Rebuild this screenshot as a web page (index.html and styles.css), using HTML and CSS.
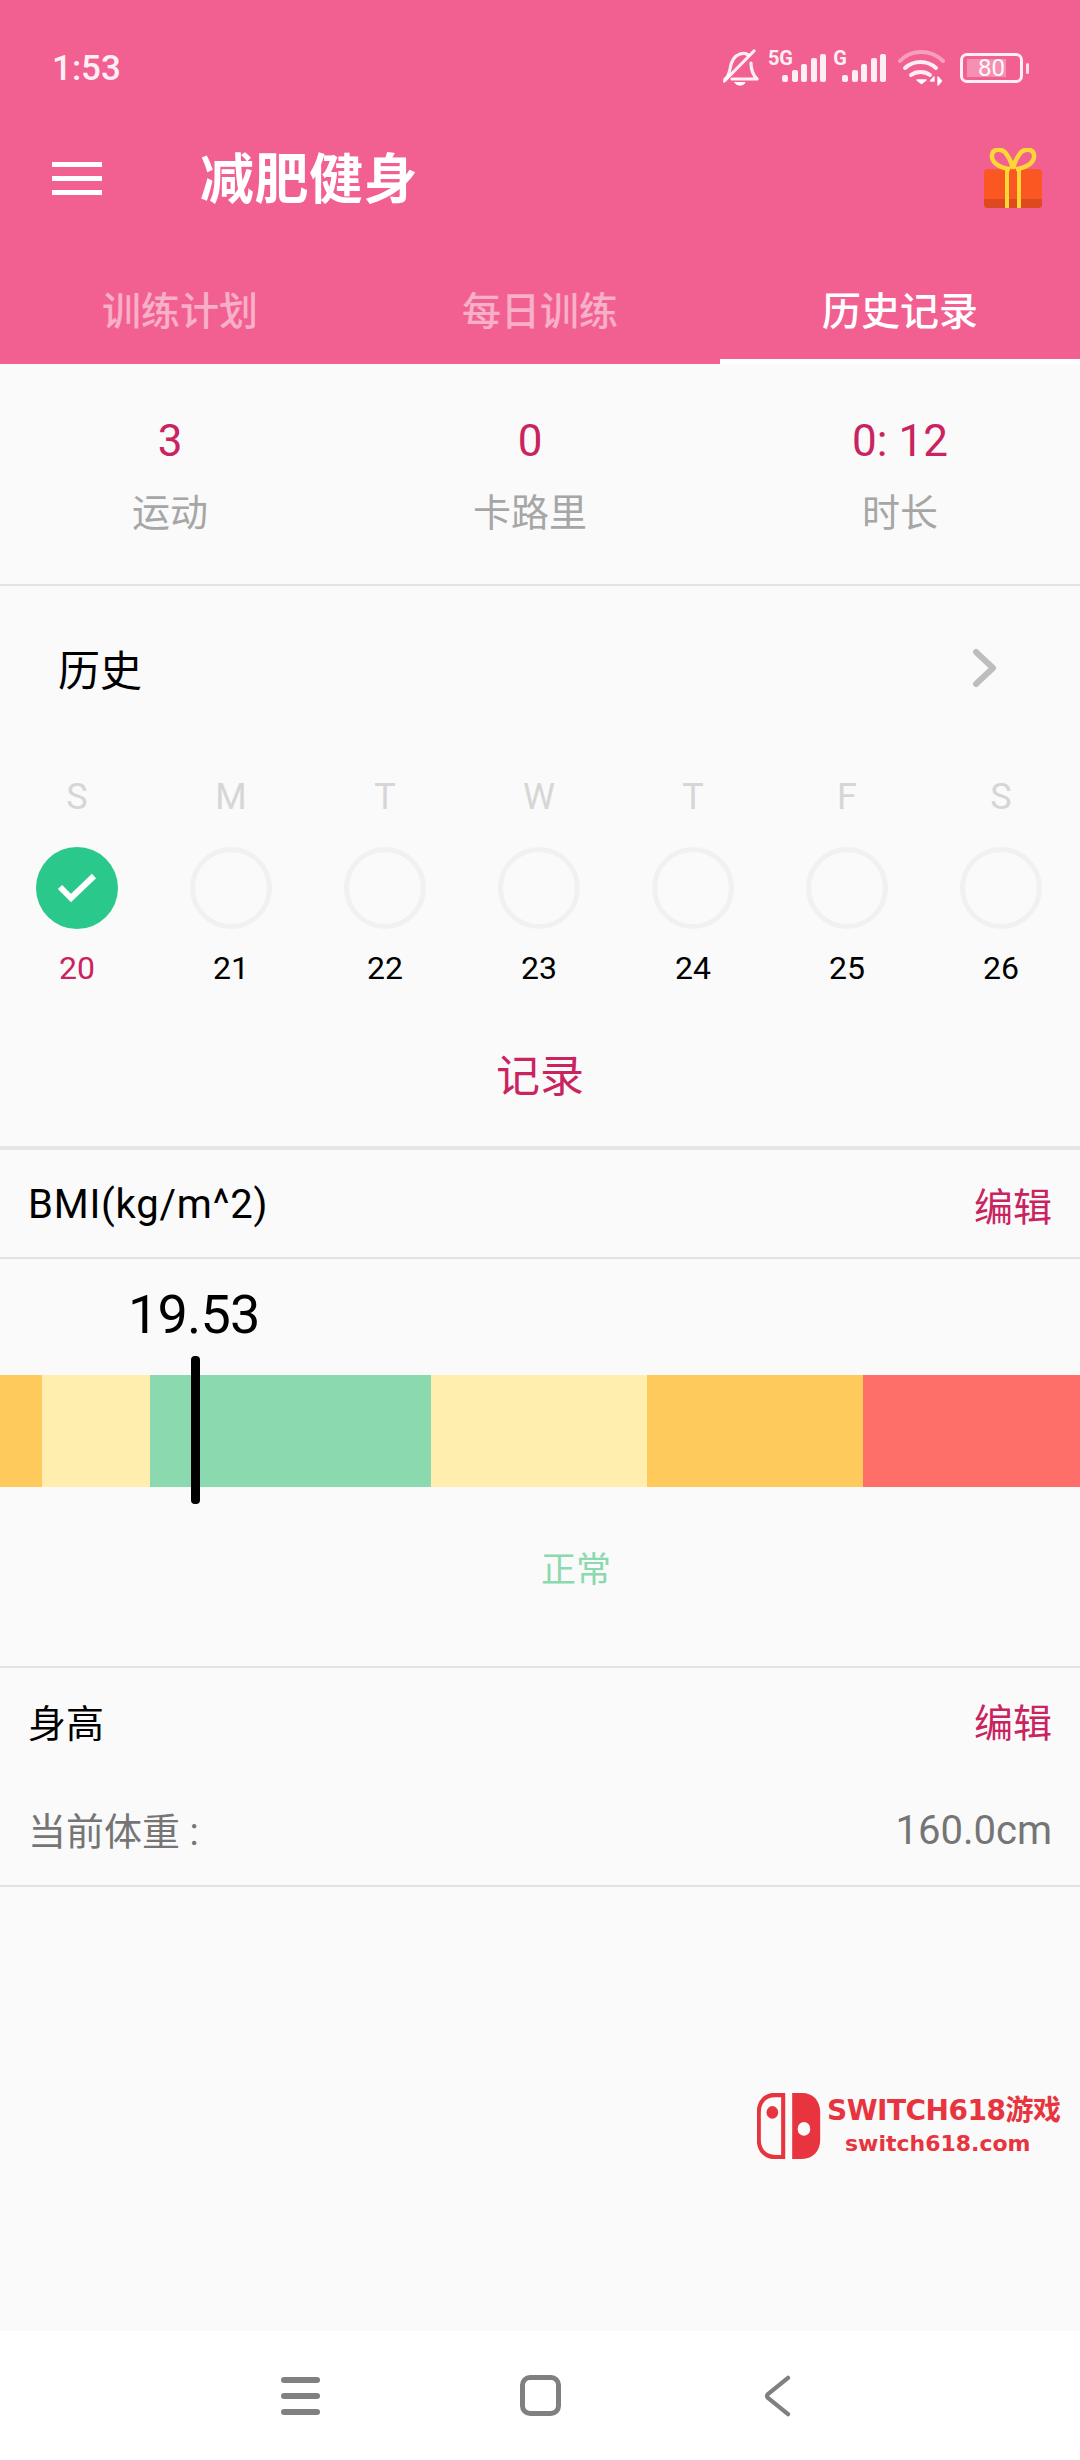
FILE: index.html
```html
<!DOCTYPE html>
<html lang="zh-CN">
<head>
    <meta charset="UTF-8">
    <meta name="viewport" content="width=device-width, initial-scale=1.0">
    <title>减肥健身</title>
    <link rel="stylesheet" href="styles.css">
</head>
<body>
    <header class="header">
        <div class="status-bar">
            <span class="time">1:53</span>
            <div class="status-icons">
                <svg class="icon-bell" width="36" height="38" viewBox="0 0 36 38" fill="none" stroke="#fff" stroke-opacity="0.9" stroke-width="3.2" stroke-linecap="round" stroke-linejoin="round">
                    <path d="M2 30c3-2 4-5 5-10 1-7 4-13 10-15 3-1 6-1 8 1"/>
                    <path d="M28 14c0 6 2 12 6 16H9"/>
                    <path d="M1.500 32 31 2"/>
                    <path d="M12 33.500h10c-1 3.500-9 3.500-10 0z" fill="#fff" stroke-width="1"/>
                </svg>
                <div class="signal">
                    <span class="signal-label">5G</span>
                    <i class="bar-1"></i><i class="bar-2"></i><i class="bar-3"></i><i class="bar-4"></i><i class="bar-5"></i>
                </div>
                <div class="signal signal-g">
                    <span class="signal-label">G</span>
                    <i class="bar-1"></i><i class="bar-2"></i><i class="bar-3"></i><i class="bar-4"></i><i class="bar-5"></i>
                </div>
                <svg class="icon-wifi" width="47" height="36" viewBox="0 0 47 36" fill="none" stroke="#fff" stroke-width="4" stroke-linecap="round">
                    <path d="M2 11C13-1 33-1 45 11" stroke-opacity="0.4"/>
                    <path d="M7 18c9-8 22-8 31 0" stroke-opacity="0.9"/>
                    <path d="M13 25c5-4 14-4 19 0" stroke-opacity="0.9"/>
                    <path d="M19 30h9l-4.500 3.500z" fill="#fff" stroke="#fff" stroke-width="1.500" stroke-linejoin="round"/>
                    <path d="M36 27l-3.500 4h3.500zM40 35v-8l3.500 4z" fill="#fff" stroke="#fff" stroke-width="1.500" stroke-linejoin="round" stroke-opacity="0.9"/>
                </svg>
                <div class="battery">
                    <div class="battery-body">
                        <div class="battery-fill"></div>
                        <span class="battery-text">80</span>
                    </div>
                    <div class="battery-tip"></div>
                </div>
            </div>
        </div>
        <div class="toolbar">
            <div class="menu-icon"><i></i><i></i><i></i></div>
            <h1 class="title">减肥健身</h1>
            <svg class="gift" width="58" height="60" viewBox="0 0 58 60">
                <rect x="0" y="21" width="58" height="39" rx="4" fill="#fb5722"/>
                <path d="M0 51h58v5a4 4 0 0 1-4 4H4a4 4 0 0 1-4-4z" fill="#dd4a20"/>
                <path d="M23 60V21M35 60V21" stroke="#fdd835" stroke-width="4"/>
                <path d="M26 21C15 20 7 14 8 7c1-7 11-7 15 0 3 4 5 9 6 14M32 21c11-1 19-7 18-14-1-7-11-7-15 0-3 4-5 9-6 14" fill="none" stroke="#fdd835" stroke-width="4.500"/>
            </svg>
        </div>
        <nav class="tabs">
            <div class="tab">训练计划</div>
            <div class="tab">每日训练</div>
            <div class="tab tab-active">历史记录</div>
        </nav>
    </header>

    <main class="content">
        <section class="stats">
            <div class="stat"><div class="stat-value">3</div><div class="stat-label">运动</div></div>
            <div class="stat"><div class="stat-value">0</div><div class="stat-label">卡路里</div></div>
            <div class="stat"><div class="stat-value">0: 12</div><div class="stat-label">时长</div></div>
        </section>

        <section class="history">
            <div class="history-head">
                <span class="history-title">历史</span>
                <svg width="26" height="40" viewBox="0 0 26 40" fill="none" stroke="#bdbdbd" stroke-width="6" stroke-linecap="round" stroke-linejoin="round"><path d="M4 4l17 16L4 36"/></svg>
            </div>
            <div class="week">
                <div class="day">
                    <div class="day-name">S</div>
                    <div class="day-circle day-done">
                        <svg width="40" height="32" viewBox="0 0 40 32" fill="none" stroke="#fff" stroke-width="6"><path d="M3 15l11 11L37 4"/></svg>
                    </div>
                    <div class="day-num day-today">20</div>
                </div>
                <div class="day"><div class="day-name">M</div><div class="day-circle"></div><div class="day-num">21</div></div>
                <div class="day"><div class="day-name">T</div><div class="day-circle"></div><div class="day-num">22</div></div>
                <div class="day"><div class="day-name">W</div><div class="day-circle"></div><div class="day-num">23</div></div>
                <div class="day"><div class="day-name">T</div><div class="day-circle"></div><div class="day-num">24</div></div>
                <div class="day"><div class="day-name">F</div><div class="day-circle"></div><div class="day-num">25</div></div>
                <div class="day"><div class="day-name">S</div><div class="day-circle"></div><div class="day-num">26</div></div>
            </div>
            <div class="record-link">记录</div>
        </section>

        <section class="bmi">
            <div class="row-head bmi-head">
                <span class="bmi-label">BMI(kg/m^2)</span>
                <span class="edit">编辑</span>
            </div>
            <div class="bmi-value">19.53</div>
            <div class="bmi-bar">
                <div class="seg seg-1"></div>
                <div class="seg seg-2"></div>
                <div class="seg seg-3"></div>
                <div class="seg seg-4"></div>
                <div class="seg seg-5"></div>
                <div class="seg seg-6"></div>
                <div class="bmi-marker"></div>
            </div>
            <div class="bmi-state">正常</div>
        </section>

        <section class="height">
            <div class="row-head height-head">
                <span>身高</span>
                <span class="edit">编辑</span>
            </div>
            <div class="height-row">
                <span>当前体重 :</span>
                <span class="height-value">160.0cm</span>
            </div>
        </section>

        <div class="watermark">
            <svg width="65" height="66" viewBox="0 0 72 68" preserveAspectRatio="none">
                <path d="M29 2H20C9 2 2 9 2 20v28c0 11 7 18 18 18h9z" fill="none" stroke="#e8343f" stroke-width="4.500"/>
                <circle cx="17" cy="20" r="6.500" fill="#e8343f"/>
                <path d="M39 0h11c12 0 20 8 20 20v28c0 12-8 20-20 20H39z" fill="#e8343f"/>
                <circle cx="52" cy="37" r="7" fill="#fafafa"/>
            </svg>
            <div class="watermark-text">
                <div class="watermark-main">SWITCH618游戏</div>
                <div class="watermark-sub">switch618.com</div>
            </div>
        </div>
    </main>

    <footer class="nav-bar">
        <div class="nav-menu"><i></i><i></i><i></i></div>
        <div class="nav-home"></div>
        <svg width="27" height="42" viewBox="0 0 28 44" fill="none" stroke="#808080" stroke-width="4.500" stroke-linecap="round" stroke-linejoin="round"><path d="M25 3 4 20q-2 2 0 4l21 17"/></svg>
    </footer>
</body>
</html>
```

FILE: styles.css
```css
* {
    box-sizing: border-box;
}

body {
    display: flex;
    flex-direction: column;
    width: 1080px;
    height: 2460px;
    margin: 0;
    overflow: hidden;
    background-color: #fafafa;
    font-family: Roboto, "Noto Sans CJK SC", sans-serif;
    color: #000;
}

/* header */
.header {
    height: 364px;
    background-color: #f26091;
    color: #fff;
}

.status-bar {
    display: flex;
    justify-content: space-between;
    align-items: center;
    height: 136px;
    padding: 0 51px 0 52px;
}

.time {
    font-size: 35px;
    font-weight: 500;
    opacity: 0.9;
}

.status-icons {
    display: flex;
    align-items: center;
    height: 40px;
}

.signal {
    display: flex;
    align-items: flex-end;
    justify-content: flex-end;
    gap: 3.5px;
    position: relative;
    width: 44px;
    height: 28px;
    margin-left: 23px;
}

.signal-g {
    margin-left: 16px;
}

.signal i {
    width: 6px;
    border-radius: 2px;
    background-color: #fff;
    opacity: 0.9;
}

.signal .bar-1 { height: 7px; }
.signal .bar-2 { height: 12px; }
.signal .bar-3 { height: 18px; }
.signal .bar-4 { height: 24px; }
.signal .bar-5 { height: 28px; }

.signal-label {
    position: absolute;
    top: -6px;
    right: 33px;
    font-size: 20px;
    font-weight: 700;
    line-height: 20px;
    opacity: 0.9;
}

.signal-g .signal-label {
    right: 39px;
}

.icon-wifi {
    margin-left: 12px;
}

.battery {
    display: flex;
    align-items: center;
    gap: 3px;
    margin-left: 15px;
}

.battery-body {
    position: relative;
    width: 63px;
    height: 30px;
    border: 3px solid rgba(255, 255, 255, 0.9);
    border-radius: 7px;
}

.battery-fill {
    position: absolute;
    top: 3px;
    bottom: 3px;
    left: 4px;
    width: 39px;
    background-color: rgba(255, 255, 255, 0.3);
}

.battery-text {
    position: absolute;
    top: 0;
    left: 0;
    width: 100%;
    font-size: 24px;
    line-height: 24px;
    text-align: center;
    opacity: 0.95;
}

.battery-tip {
    width: 3px;
    height: 11px;
    border-radius: 2px;
    background-color: rgba(255, 255, 255, 0.8);
}

.toolbar {
    display: flex;
    align-items: center;
    height: 84px;
    padding: 0 38px 6px 52px;
}

.menu-icon {
    display: flex;
    flex-direction: column;
    gap: 9px;
    width: 50px;
    margin-top: 6px;
}

.menu-icon i {
    height: 5px;
    background-color: #fff;
}

.title {
    flex: 1;
    margin: 0 0 0 98px;
    font-size: 54px;
    font-weight: 700;
    letter-spacing: 0.5px;
}

.gift {
    display: block;
    margin-top: 5px;
}

.tabs {
    display: grid;
    grid-template-columns: repeat(3, 1fr);
    height: 106px;
    margin-top: 38px;
}

.tab {
    display: flex;
    justify-content: center;
    align-items: center;
    padding-bottom: 6px;
    font-size: 39px;
    font-weight: 500;
    color: rgba(255, 255, 255, 0.5);
}

.tab-active {
    border-bottom: 5px solid #fff;
    padding-top: 5px;
    color: #fff;
}

/* content */
.content {
    position: relative;
    flex: 1;
}

.stats {
    display: grid;
    grid-template-columns: 340px 380px 360px;
    height: 222px;
    padding-top: 50px;
    border-bottom: 2px solid #e2e2e2;
    text-align: center;
}

.stat-value {
    font-size: 44px;
    line-height: 54px;
    color: #c9245f;
}

.stat-label {
    margin-top: 18px;
    font-size: 38px;
    line-height: 54px;
    color: #a6a6a6;
}

.history {
    height: 564px;
    border-bottom: 4px solid #e4e6e4;
}

.history-head {
    display: flex;
    justify-content: space-between;
    align-items: center;
    height: 170px;
    padding: 0 82px 6px 58px;
}

.history-title {
    font-size: 42px;
    margin-top: -2px;
}

.week {
    display: grid;
    grid-template-columns: repeat(7, 1fr);
    margin-top: 16px;
    padding-right: 2px;
}

.day {
    display: flex;
    flex-direction: column;
    align-items: center;
}

.day-name {
    font-size: 36px;
    line-height: 50px;
    color: #d6d6d6;
}

.day-circle {
    display: flex;
    justify-content: center;
    align-items: center;
    width: 82px;
    height: 82px;
    margin-top: 25px;
    border: 5px solid #f1f1f1;
    border-radius: 50%;
}

.day-done {
    border: none;
    background-color: #2bc88b;
}

.day-num {
    margin-top: 17px;
    font-size: 32px;
    line-height: 44px;
}

.day-today {
    color: #c9245f;
}

.record-link {
    margin-top: 57px;
    font-size: 44px;
    line-height: 60px;
    text-align: center;
    color: #c9245f;
}

.row-head {
    display: flex;
    justify-content: space-between;
    align-items: center;
    padding: 0 28px;
    font-size: 40px;
}

.bmi-label {
    margin-top: 2px;
    letter-spacing: 0.8px;
}

.edit {
    color: #c9245f;
    font-size: 39px;
}

.bmi {
    height: 518px;
    border-bottom: 2px solid #e2e2e2;
}

.bmi-head {
    height: 109px;
    border-bottom: 2px solid #e2e2e2;
}

.bmi-value {
    height: 116px;
    padding: 24px 0 0 128px;
    font-size: 54px;
    line-height: 64px;
    letter-spacing: -0.8px;
}

.bmi-bar {
    position: relative;
    display: flex;
    height: 112px;
}

.seg-1 { width: 42px; background-color: #ffca5c; }
.seg-2 { width: 108px; background-color: #ffeeae; }
.seg-3 { width: 281px; background-color: #8bd9af; }
.seg-4 { width: 216px; background-color: #ffeeae; }
.seg-5 { width: 216px; background-color: #ffca5c; }
.seg-6 { width: 217px; background-color: #ff6f69; }

.bmi-marker {
    position: absolute;
    top: -19px;
    left: 191px;
    width: 9px;
    height: 148px;
    border-radius: 4px;
    background-color: #000;
}

.bmi-state {
    padding: 62px 0 0 72px;
    font-size: 35px;
    line-height: 44px;
    text-align: center;
    color: #8bd9af;
}

.height {
    height: 219px;
    border-bottom: 2px solid #e2e2e2;
}

.height-head {
    height: 110px;
    padding-bottom: 6px;
    font-size: 38px;
}

.height-row {
    display: flex;
    justify-content: space-between;
    align-items: center;
    height: 56px;
    margin-top: 22px;
    padding: 0 28px;
    font-size: 38px;
    color: #757575;
}

.height-value {
    margin-top: 4px;
    font-size: 40px;
}

/* site logo lying over the page */
.watermark {
    position: absolute;
    top: 1729px;
    left: 757px;
    display: flex;
    gap: 5px;
    color: #e8343f;
}

.watermark-text {
    text-align: center;
    font-family: "DejaVu Sans", "Noto Sans CJK SC", sans-serif;
    font-weight: 700;
    white-space: nowrap;
}

.watermark-main {
    font-size: 28px;
    line-height: 36px;
    letter-spacing: -0.5px;
}

.watermark-sub {
    padding-right: 12px;
    font-size: 22px;
    line-height: 30px;
}

/* system nav bar */
.nav-bar {
    display: flex;
    justify-content: space-between;
    align-items: center;
    height: 129px;
    padding: 0 289px 0 281px;
    background-color: #fff;
}

.nav-menu {
    display: flex;
    flex-direction: column;
    gap: 10px;
    width: 39px;
}

.nav-menu i {
    height: 6px;
    border-radius: 3px;
    background-color: #808080;
}

.nav-home {
    width: 41px;
    height: 41px;
    margin-right: 3px;
    border: 5px solid #808080;
    border-radius: 10px;
}
```
